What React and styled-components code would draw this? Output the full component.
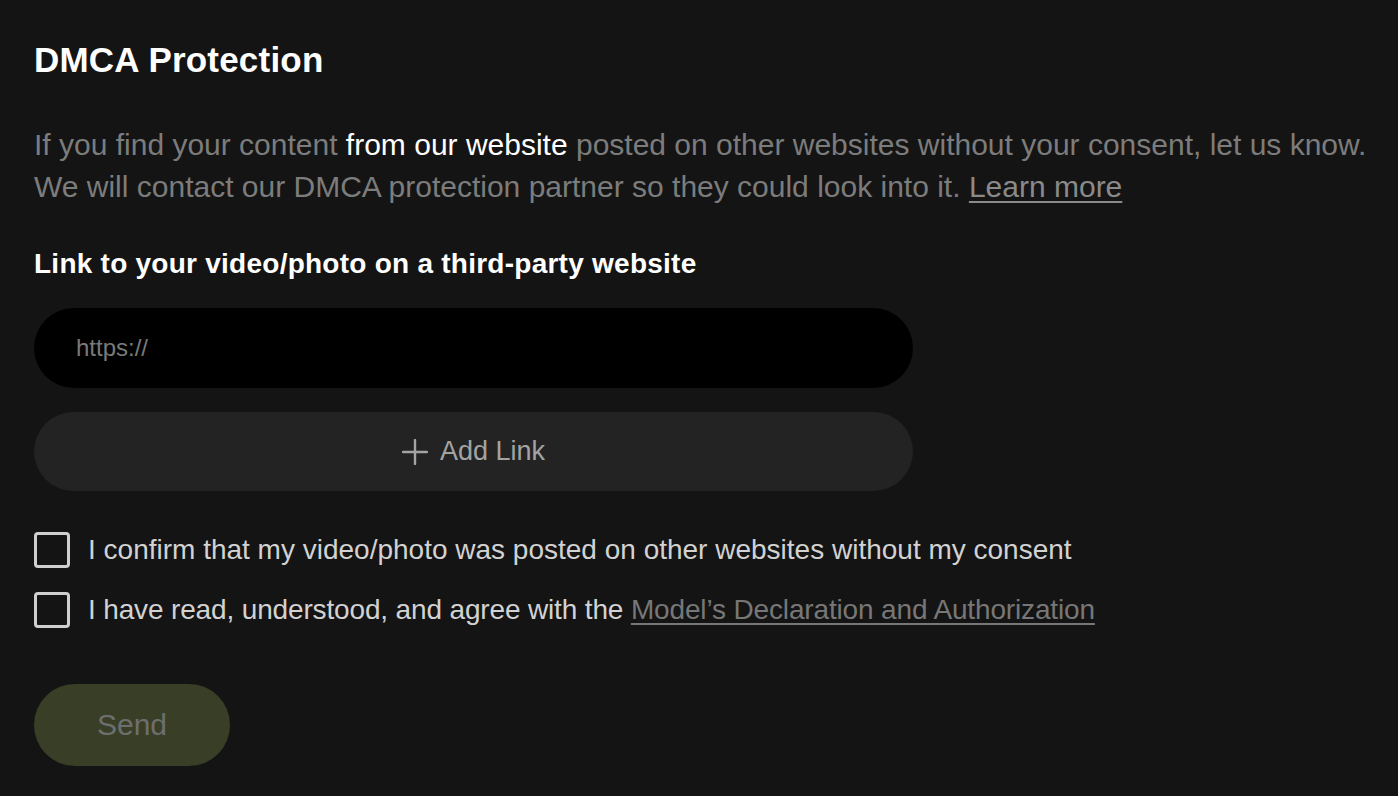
import React, { useState } from "react";
import styled, { createGlobalStyle } from "styled-components";

const GlobalStyle = createGlobalStyle`
  html, body {
    margin: 0;
    padding: 0;
    background: #141414;
  }
  body {
    font-family: "Liberation Sans", Arial, sans-serif;
  }
`;

const Page = styled.div`
  min-height: 796px;
  box-sizing: border-box;
  padding: 38px 34px 0;
  background: #141414;
  display: flex;
  flex-direction: column;
`;

const Title = styled.h1`
  margin: 0;
  font-size: 35px;
  letter-spacing: 0.2px;
  line-height: 44px;
  font-weight: 700;
  color: #fff;
`;

const Intro = styled.p`
  margin: 42px 0 0;
  font-size: 30px;
  line-height: 42px;
  color: #7c7c7c;
  white-space: nowrap;
`;

const Strong = styled.span`
  color: #fff;
`;

const TextLink = styled.a`
  color: ${(p) => p.$color || "#8a8a8a"};
  text-decoration: underline;
  text-underline-offset: 4px;
  text-decoration-thickness: 2px;
  cursor: pointer;
`;

const Label = styled.div`
  margin-top: 40px;
  font-size: 28px;
  letter-spacing: 0.25px;
  line-height: 32px;
  font-weight: 700;
  color: #fff;
`;

const Field = styled.div`
  width: 879px;
  display: flex;
  flex-direction: column;
  gap: 24px;
  margin-top: 28px;
`;

const Input = styled.input`
  height: 80px;
  box-sizing: border-box;
  border: none;
  border-radius: 40px;
  background: #000;
  padding: 0 42px;
  font-family: inherit;
  font-size: 24px;
  color: #fff;
  outline: none;
  &::placeholder {
    color: #7a7a7a;
  }
`;

const AddButton = styled.button`
  height: 79px;
  border: none;
  border-radius: 40px;
  background: #232323;
  color: #a3a3a3;
  font-family: inherit;
  font-size: 27px;
  display: flex;
  align-items: center;
  justify-content: center;
  gap: 12px;
  cursor: pointer;
`;

const Checks = styled.div`
  margin-top: 41px;
  display: flex;
  flex-direction: column;
  gap: 24px;
`;

const CheckRow = styled.label`
  display: flex;
  align-items: center;
  gap: 18px;
  font-size: 28px;
  line-height: 36px;
  letter-spacing: ${(p) => p.$tight ? "-0.15px" : "0"};
  color: #d2d2d2;
  white-space: nowrap;
  cursor: pointer;
`;

const Box = styled.span`
  width: 36px;
  height: 36px;
  box-sizing: border-box;
  border: 3px solid #cfcfcf;
  border-radius: 4px;
  flex-shrink: 0;
  background: ${(p) => (p.$on ? "#cfcfcf" : "transparent")};
`;

const SendButton = styled.button`
  margin-top: 56px;
  width: 196px;
  height: 82px;
  border: none;
  border-radius: 41px;
  background: #383f26;
  color: #6e6e6e;
  font-family: inherit;
  font-size: 30px;
  cursor: default;
`;

const Plus = () => (
  <svg width="26" height="26" viewBox="0 0 26 26" fill="none">
    <path d="M13 1v24M1 13h24" stroke="#a3a3a3" strokeWidth="2.4" strokeLinecap="round" />
  </svg>
);

const Checkbox = ({ checked, onToggle, tight, children }) => (
  <CheckRow onClick={onToggle} $tight={tight}>
    <Box $on={checked} />
    <span>{children}</span>
  </CheckRow>
);

export default function App() {
  const [confirm, setConfirm] = useState(false);
  const [agree, setAgree] = useState(false);

  return (
    <>
      <GlobalStyle />
      <Page>
        <Title>DMCA Protection</Title>
        <Intro>
          If you find your content <Strong>from our website</Strong> posted on other websites without
          your consent, let us know.
          <br />
          We will contact our DMCA protection partner so they could look into it.{" "}
          <TextLink>Learn more</TextLink>
        </Intro>
        <Label>Link to your video/photo on a third-party website</Label>
        <Field>
          <Input placeholder="https://" />
          <AddButton>
            <Plus />
            Add Link
          </AddButton>
        </Field>
        <Checks>
          <Checkbox checked={confirm} onToggle={() => setConfirm(!confirm)}>
            I confirm that my video/photo was posted on other websites without my consent
          </Checkbox>
          <Checkbox checked={agree} onToggle={() => setAgree(!agree)} tight>
            I have read, understood, and agree with the{" "}
            <TextLink $color="#777">Model’s Declaration and Authorization</TextLink>
          </Checkbox>
        </Checks>
        <div>
          <SendButton disabled={!(confirm && agree)}>Send</SendButton>
        </div>
      </Page>
    </>
  );
}
